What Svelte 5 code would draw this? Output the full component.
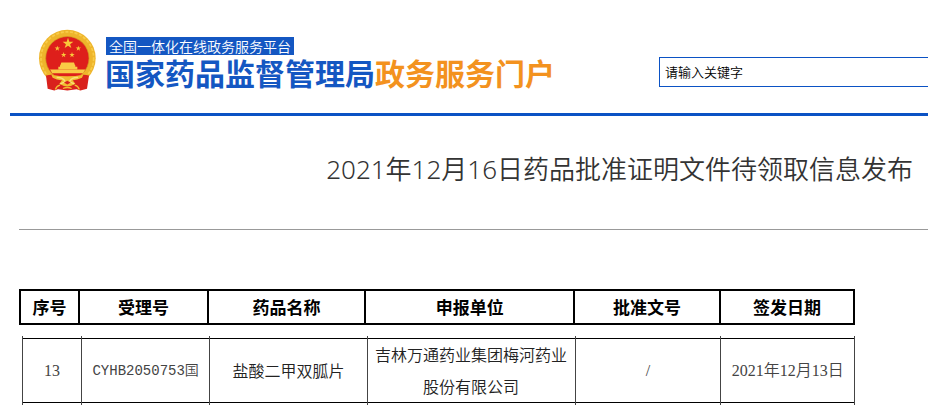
<script lang="ts">
	interface Approval {
		index: number;
		acceptanceNo: string;
		drugName: string;
		applicant: string;
		approvalNo: string;
		issueDate: string;
	}

	const columns = [
		{ label: '序号', width: 7.1 },
		{ label: '受理号', width: 15.4 },
		{ label: '药品名称', width: 18.9 },
		{ label: '申报单位', width: 25 },
		{ label: '批准文号', width: 17.5 },
		{ label: '签发日期', width: 16.1 }
	];

	const approvals: Approval[] = [
		{
			index: 13,
			acceptanceNo: 'CYHB2050753国',
			drugName: '盐酸二甲双胍片',
			applicant: '吉林万通药业集团梅河药业股份有限公司',
			approvalNo: '/',
			issueDate: '2021年12月13日'
		}
	];

	const star = 'M0 -10 2.3 -3.1 9.5 -3.1 3.7 1.2 5.9 8.1 0 3.8 -5.9 8.1 -3.7 1.2 -9.5 -3.1 -2.3 -3.1Z';
</script>

<div class="page">
	<header>
		<div class="brand">
			<svg class="emblem" viewBox="24 27 174 186" aria-hidden="true">
				<circle cx="112" cy="113" r="85" fill="#eeb52b" />
				<circle cx="112" cy="113" r="79" fill="none" stroke="#f8cb49" stroke-width="5" stroke-dasharray="9 5" />
				<circle cx="112" cy="113" r="65" fill="#de1f1b" stroke="#d09a22" stroke-width="2" />
				<path d={star} transform="translate(114 69) scale(1.7)" fill="#f9c83a" />
				<path d={star} transform="translate(82 84) scale(.85)" fill="#f9c83a" />
				<path d={star} transform="translate(145 84) scale(.85)" fill="#f9c83a" />
				<path d={star} transform="translate(101 103) scale(.85)" fill="#f9c83a" />
				<path d={star} transform="translate(126 103) scale(.85)" fill="#f9c83a" />
				<path d="M94 126h38l3 8H91zM90 134h46v5H90zM85 139h57v7H85zM60 147h106l-7 11H67z" fill="#f9cb45" />
				<path d="M48 165Q80 158 98 177L112 184 126 177Q146 158 177 165L171 205 151 210 140 206 112 210 84 206 73 210 53 205Z" fill="#d9211d" />
				<path d="M64 163Q112 172 160 163L156 172Q138 180 128 179L136 190Q112 206 88 190L96 179Q82 180 68 172Z" fill="#f1bd32" />
				<path d="M80 171Q98 170 105 182M144 171Q126 170 119 182M91 190Q112 178 133 190" fill="none" stroke="#fbe07a" stroke-width="4" />
				<path d="M102 186 112 181 122 186 112 192Z" fill="#d9211d" />
				<path d="M76 207Q80 196 90 194M148 207Q144 196 134 194M99 204Q112 198 125 204" fill="none" stroke="#f1bd32" stroke-width="4" />
			</svg>
			<div>
				<p class="platform">全国一体化在线政务服务平台</p>
				<p class="site">国家药品监督管理局<span>政务服务门户</span></p>
			</div>
		</div>
		<input type="search" aria-label="请输入关键字" placeholder="请输入关键字" />
	</header>

	<main>
		<h1>2021年12月16日药品批准证明文件待领取信息发布</h1>

		<table class="head">
			<colgroup>
				{#each columns as column}
					<col style:width={`${column.width}%`} />
				{/each}
			</colgroup>
			<thead>
				<tr>
					{#each columns as column}
						<th scope="col">{column.label}</th>
					{/each}
				</tr>
			</thead>
		</table>

		<table class="body" aria-label="药品批准证明文件">
			<colgroup>
				{#each columns as column}
					<col style:width={`${column.width}%`} />
				{/each}
			</colgroup>
			<tbody>
				{#each approvals as approval (approval.index)}
					<tr>
						<td class="number">{approval.index}</td>
						<td class="code">{approval.acceptanceNo}</td>
						<td>{approval.drugName}</td>
						<td>{approval.applicant}</td>
						<td class="number">{approval.approvalNo}</td>
						<td class="number">{approval.issueDate}</td>
					</tr>
				{/each}
			</tbody>
		</table>
	</main>
</div>

<style>
	:global(body) {
		margin: 0;
		background: #fff;
	}

	.page {
		padding: 0 10px 10px;
		font-family: 'Noto Sans CJK SC', sans-serif;
		color: #000;
	}

	header {
		display: flex;
		justify-content: space-between;
		padding: 29px 0 21px 28px;
		border-bottom: 3px solid #0b52c4;
	}

	.brand {
		display: flex;
		gap: 9px;
	}
	.emblem {
		width: 58px;
		height: 63px;
	}

	p {
		margin: 0;
		white-space: nowrap;
	}
	.platform {
		width: fit-content;
		margin: 8px 0 0 1px;
		padding: 0 3px;
		background: #1457c2;
		color: #fff;
		font-size: 14px;
		font-weight: 350;
		line-height: 18px;
	}
	.site {
		color: #1457c2;
		font-size: 30px;
		font-weight: bold;
		line-height: 34px;
	}
	.site span {
		color: #f3921e;
	}

	input {
		box-sizing: border-box;
		width: 269px;
		height: 30px;
		margin: 28px 0 0;
		padding: 0 5px 2px;
		border: 1px solid #0b52c4;
		border-right: 0;
		border-radius: 0;
		outline: 0;
		background: #fff;
		font-family: inherit;
		font-size: 13px;
		font-weight: 350;
		appearance: none;
	}
	input::placeholder {
		color: #000;
		opacity: 1;
	}

	main {
		padding-left: 9px;
	}

	h1 {
		margin: 0 0 59px;
		padding: 33px 15px 40px 0;
		border-bottom: 1px solid #999;
		color: #333;
		font-family: 'Noto Sans', 'Noto Sans CJK SC', sans-serif;
		font-size: 26px;
		font-weight: 350;
		line-height: 40px;
		text-align: right;
	}

	table {
		width: 92%;
		table-layout: fixed;
		border-collapse: collapse;
		text-align: center;
	}
	th,
	td {
		box-sizing: border-box;
		padding: 0;
	}

	.head th {
		height: 34px;
		border: 2px solid #000;
		font-size: 17px;
		line-height: 24px;
	}

	.body {
		width: calc(92% - 3px);
		margin: 11px 0 0 3px;
	}
	/* the side rules run 2px past the top and bottom ones */
	.body td {
		height: 69px;
		padding: 0 6px 2px;
		border: solid #444;
		border-width: 0 1px;
		background:
			linear-gradient(#000, #000) 0 2px / 100% 1px no-repeat,
			linear-gradient(#000, #000) 0 calc(100% - 2px) / 100% 1px no-repeat;
		color: #222;
		font-size: 16px;
		font-weight: 350;
		line-height: 32px;
	}
	.body .number {
		padding-bottom: 0;
		color: #444;
		font-family: 'Liberation Serif', 'Noto Sans CJK SC', serif;
	}
	.body .code {
		padding-bottom: 0;
		color: #444;
		font-family: 'Liberation Mono', 'Noto Sans CJK SC', monospace;
		font-size: 14px;
	}
</style>
